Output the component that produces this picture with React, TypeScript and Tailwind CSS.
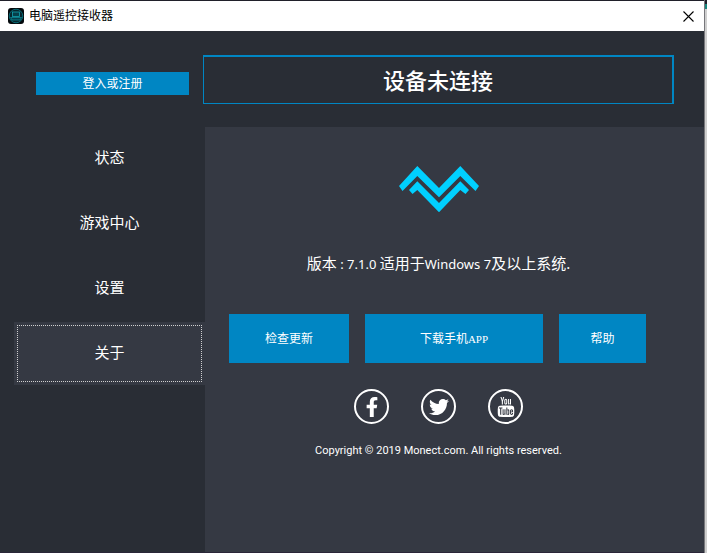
import React, { useState } from 'react';
import { FaFacebookF, FaTwitter } from 'react-icons/fa';
import { TfiYoutube } from 'react-icons/tfi';

const navItems = ['状态', '游戏中心', '设置', '关于'];

const actions = [
  { label: '检查更新', width: 'w-[120px]' },
  { label: '下载手机', suffix: 'APP', width: 'w-[178px]' },
  { label: '帮助', width: 'w-[87px]' }
];

const socials = [
  { name: 'Facebook', icon: <FaFacebookF className="h-5 w-5" /> },
  { name: 'Twitter', icon: <FaTwitter className="h-5 w-5" /> },
  { name: 'YouTube', icon: <TfiYoutube className="h-5 w-5" /> }
];

function AppIcon() {
  return (
    <svg viewBox="0 0 16 16" className="h-4 w-4" aria-hidden="true">
      <rect width="16" height="16" rx="3" fill="#04090c" />
      <circle cx="8" cy="8" r="6.8" fill="#06262e" stroke="#0a7f8c" strokeWidth="0.8" />
      <rect x="4.5" y="4" width="7" height="4.5" fill="#063f4a" stroke="#12a5b2" strokeWidth="0.8" />
      <path d="M2.5 9.5h11l-1.5 2.5H4z" fill="#063f4a" stroke="#0f95a2" strokeWidth="0.7" />
    </svg>
  );
}

function Logo() {
  return (
    <svg viewBox="0 0 80 47" className="h-[47px] w-20" fill="#00d0ff" aria-hidden="true">
      <path d="M0 20 18.3 0 40 22 61.3 0 80 20 76.5 25 61.3 10 40 31.3 18.3 10 3.5 25Z" />
      <path d="M10 24 18.3 15.3 40 37 61.3 15.3 70 24 66.5 28 61.3 24 40 46.3 18.3 24 13.5 28Z" />
    </svg>
  );
}

function TitleBar() {
  return (
    <header className="flex h-[31px] items-center justify-between border-t border-[#20202a] bg-white pl-2 pr-[10px] text-black">
      <div className="flex items-center gap-[5px]">
        <AppIcon />
        <h1 className="text-xs">电脑遥控接收器</h1>
      </div>
      <button type="button" aria-label="关闭">
        <svg viewBox="0 0 11 11" className="h-[11px] w-[11px]" stroke="#000" strokeWidth="1.1">
          <path d="M.5.5l10 10M10.5.5l-10 10" />
        </svg>
      </button>
    </header>
  );
}

function Sidebar({ active, onSelect }: { active: string; onSelect: (item: string) => void }) {
  return (
    <nav className="flex w-[205px] shrink-0 flex-col gap-0.5 pl-[14px]">
      {navItems.map((item) => (
        <button
          key={item}
          type="button"
          onClick={() => onSelect(item)}
          className={`h-[63px] p-[3px] text-[15px] ${item === active ? 'bg-[#353943]' : ''}`}
        >
          <span
            className={`flex h-full items-center justify-center border border-dotted pb-0.5 ${
              item === active ? 'border-[#d0d0d0]' : 'border-transparent'
            }`}
          >
            {item}
          </span>
        </button>
      ))}
    </nav>
  );
}

function About() {
  return (
    <main className="flex flex-1 flex-col bg-[#353943] pl-6 pr-14 pt-[39px]">
      <div className="flex justify-center">
        <Logo />
      </div>
      <p className="mt-10 whitespace-nowrap text-center text-[15px] leading-5">
        版本<span className="text-[13px]"> : 7.1.0 </span>适用于
        <span className="text-[13px]">Windows 7</span>及以上系统.
      </p>
      <div className="mt-10 flex gap-4">
        {actions.map((action) => (
          <button
            key={action.label}
            type="button"
            className={`h-[49px] bg-[#0086c3] text-xs ${action.width}`}
          >
            {action.label}
            {action.suffix && (
              <span className="font-['Liberation_Serif',serif] text-[11px]">{action.suffix}</span>
            )}
          </button>
        ))}
      </div>
      <div className="mt-[26px] flex justify-center gap-8">
        {socials.map((social) => (
          <a
            key={social.name}
            href="#"
            aria-label={social.name}
            className="flex h-[35px] w-[35px] items-center justify-center rounded-full border-2 border-white"
          >
            {social.icon}
          </a>
        ))}
      </div>
      <p className="mt-[19px] text-center font-['Roboto',sans-serif] text-[11px] leading-4">
        Copyright © 2019 Monect.com. All rights reserved.
      </p>
    </main>
  );
}

export default function App() {
  const [active, setActive] = useState('关于');

  return (
    <div className="flex min-h-screen bg-[#292d35] font-['Noto_Sans','Noto_Sans_CJK_SC',sans-serif] text-white">
      <div className="flex min-w-0 flex-1 flex-col border-b border-[#2a2638]">
        <TitleBar />
        <div className="flex h-24 items-start gap-[14px] pl-9 pr-[30px] pt-6">
          <button type="button" className="mt-[17px] h-[23px] w-[153px] bg-[#0086c3] text-xs">
            登入或注册
          </button>
          <h2 className="flex h-[49px] flex-1 items-center justify-center border-b border-l border-r-2 border-t-2 border-[#0086c3] text-[22px] font-medium">
            设备未连接
          </h2>
        </div>
        <div className="flex flex-1">
          <Sidebar active={active} onSelect={setActive} />
          <About />
        </div>
      </div>
      {/* sliver of the window behind */}
      <div className="flex w-[3px] flex-col border-l border-[#77777b] bg-[#cfcfcf]">
        <div className="h-1 bg-[#20202a]" />
        <div className="h-[5px] bg-[#16857c]" />
      </div>
    </div>
  );
}
